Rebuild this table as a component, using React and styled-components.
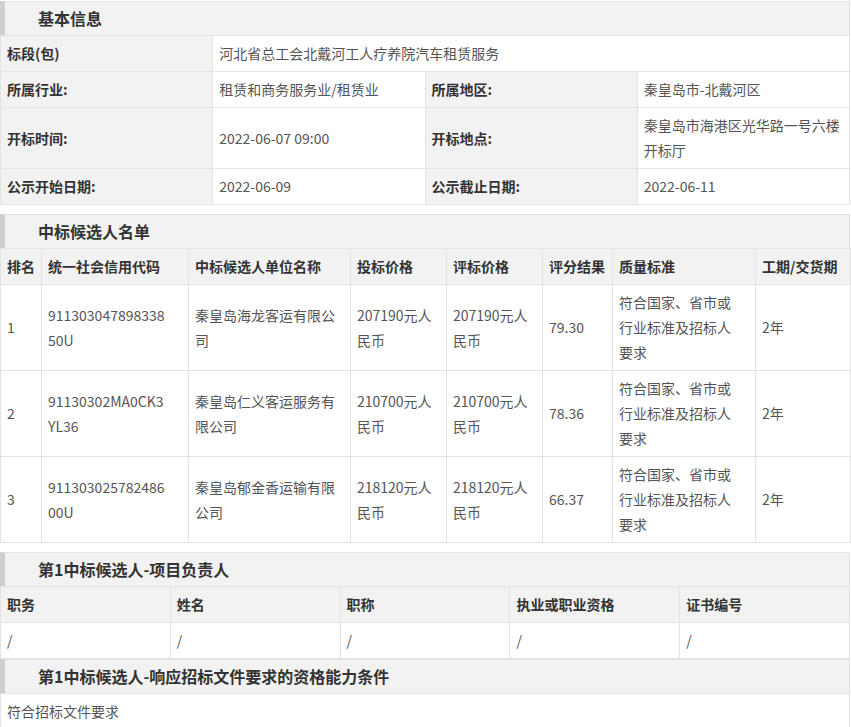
import React from 'react'
import styled, { createGlobalStyle } from 'styled-components'

// Styling

const line = '#e3e3e3'
const shade = '#f2f2f2'

const GlobalStyle = createGlobalStyle`
  body {
    margin: 0;
    background: #fff;
    font-family: "Noto Sans CJK SC", "Noto Sans", sans-serif;
    font-size: 14px;
    color: #555;
  }
`
export const Page = styled.div`
  width: 850px;
  padding-top: 1px;
`
export const Block = styled.div`
  margin-bottom: ${p => (p.$tight ? '0' : '9px')};
`
export const Title = styled.div`
  height: 33px;
  line-height: 33px;
  background: ${shade};
  border: 1px solid ${line};
  border-bottom: none;
  border-left: 5px solid #cfcfcf;
  padding-left: 33px;
  font-size: 16px;
  font-weight: 700;
  color: #333;
`
export const Table = styled.table`
  width: 100%;
  border-collapse: collapse;
  table-layout: fixed;
`
export const Col = styled.col`
  width: ${p => p.$w};
`
export const Label = styled.th`
  background: ${shade};
  border: 1px solid ${line};
  padding: 5px 6px;
  line-height: 25px;
  text-align: left;
  font-weight: 700;
  color: #333;
  white-space: nowrap;
  overflow: hidden;
`
export const Cell = styled.td`
  border: 1px solid ${line};
  padding: 5px ${p => p.$pr || '6px'} 5px 6px;
  line-height: 25px;
  vertical-align: ${p => (p.$top ? 'top' : 'middle')};
  color: #555;
  word-break: break-all;
  height: ${p => p.$h || 'auto'};
`

// Data

const candidates = [
  ['1', '91130304789833850U', '秦皇岛海龙客运有限公司', '207190元人民币', '207190元人民币', '79.30'],
  ['2', '91130302MA0CK3YL36', '秦皇岛仁义客运服务有限公司', '210700元人民币', '210700元人民币', '78.36'],
  ['3', '91130302578248600U', '秦皇岛郁金香运输有限公司', '218120元人民币', '218120元人民币', '66.37'],
]

// header, column width, right padding of body cells
const heads = [
  ['排名', '41px', '6px'],
  ['统一社会信用代码', '147px', '19px'],
  ['中标候选人单位名称', '162px', '10px'],
  ['投标价格', '96px', '6px'],
  ['评标价格', '96px', '6px'],
  ['评分结果', '70px', '6px'],
  ['质量标准', '143px', '14px'],
  ['工期/交货期', '95px', '6px'],
]

const managers = ['职务', '姓名', '职称', '执业或职业资格', '证书编号']

// Component

export default function App() {
  return (
    <Page>
      <GlobalStyle />
      <Block>
        <Title>基本信息</Title>
        <Table>
          <colgroup>
            <Col $w="25%" />
            <Col $w="25%" />
            <Col $w="25%" />
            <Col $w="25%" />
          </colgroup>
          <tbody>
            <tr>
              <Label>标段(包)</Label>
              <Cell colSpan={3}>河北省总工会北戴河工人疗养院汽车租赁服务</Cell>
            </tr>
            <tr>
              <Label>所属行业:</Label>
              <Cell>租赁和商务服务业/租赁业</Cell>
              <Label>所属地区:</Label>
              <Cell>秦皇岛市-北戴河区</Cell>
            </tr>
            <tr>
              <Label>开标时间:</Label>
              <Cell>2022-06-07 09:00</Cell>
              <Label>开标地点:</Label>
              <Cell>秦皇岛市海港区光华路一号六楼开标厅</Cell>
            </tr>
            <tr>
              <Label>公示开始日期:</Label>
              <Cell>2022-06-09</Cell>
              <Label>公示截止日期:</Label>
              <Cell>2022-06-11</Cell>
            </tr>
          </tbody>
        </Table>
      </Block>

      <Block>
        <Title>中标候选人名单</Title>
        <Table>
          <colgroup>
            {heads.map(([h, w]) => (
              <Col key={h} $w={w} />
            ))}
          </colgroup>
          <thead>
            <tr>
              {heads.map(([h]) => (
                <Label key={h}>{h}</Label>
              ))}
            </tr>
          </thead>
          <tbody>
            {candidates.map(c => (
              <tr key={c[0]}>
                {c.map((v, i) => (
                  <Cell key={i} $pr={heads[i][2]}>{v}</Cell>
                ))}
                <Cell $pr={heads[6][2]}>符合国家、省市或行业标准及招标人要求</Cell>
                <Cell>2年</Cell>
              </tr>
            ))}
          </tbody>
        </Table>
      </Block>

      <Block $tight>
        <Title>第1中标候选人-项目负责人</Title>
        <Table>
          <colgroup>
            {managers.map(m => (
              <Col key={m} $w="20%" />
            ))}
          </colgroup>
          <thead>
            <tr>
              {managers.map(m => (
                <Label key={m}>{m}</Label>
              ))}
            </tr>
          </thead>
          <tbody>
            <tr>
              {managers.map(m => (
                <Cell key={m}>/</Cell>
              ))}
            </tr>
          </tbody>
        </Table>
      </Block>

      <Block>
        <Title>第1中标候选人-响应招标文件要求的资格能力条件</Title>
        <Table>
          <tbody>
            <tr>
              <Cell $h="60px" $top>符合招标文件要求</Cell>
            </tr>
          </tbody>
        </Table>
      </Block>
    </Page>
  )
}
